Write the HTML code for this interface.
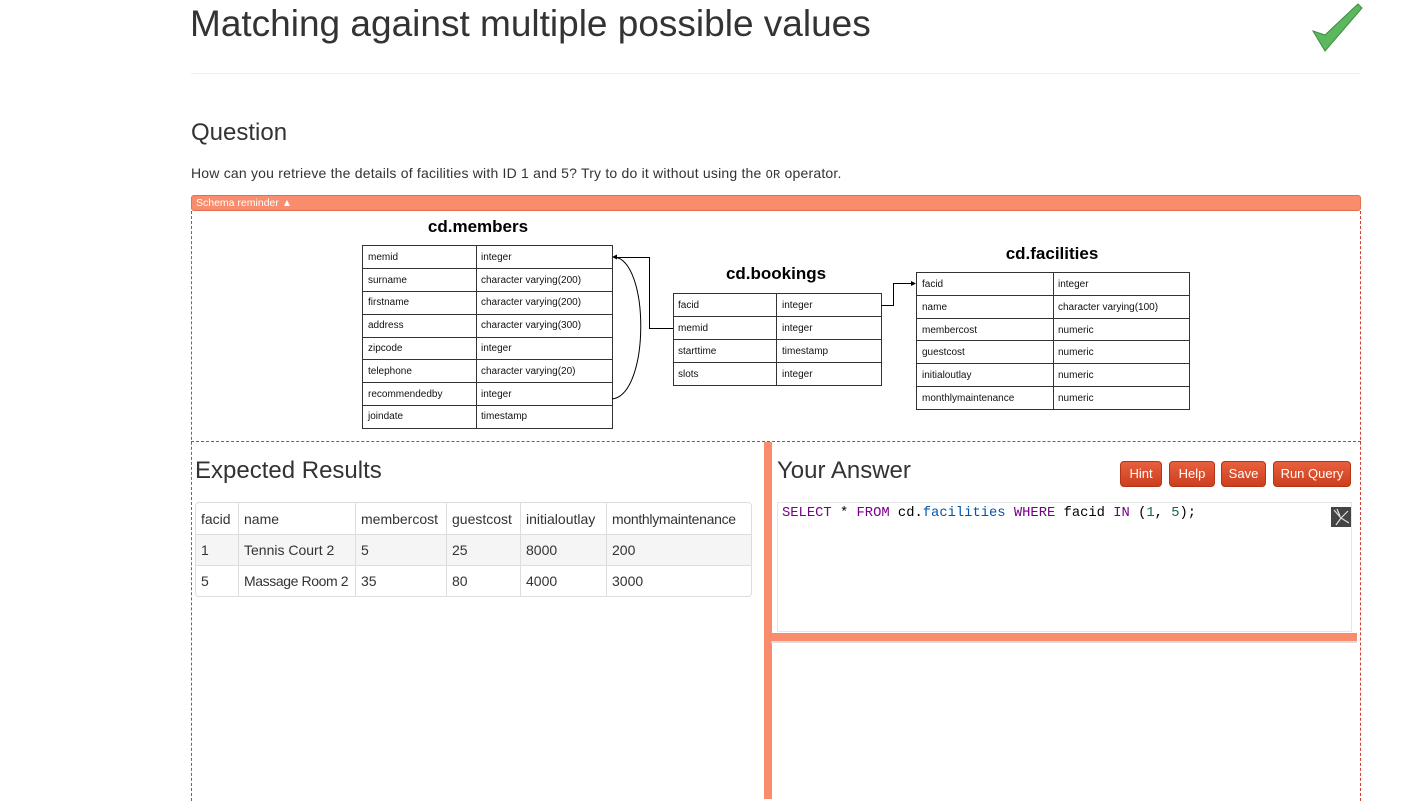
<!DOCTYPE html>
<html><head><meta charset="utf-8"><style>
*{margin:0;padding:0;box-sizing:border-box}
body{width:1409px;height:799px;overflow:hidden;background:#fff;font-family:"Liberation Sans","DejaVu Sans",sans-serif;color:#333;position:relative}
.a{position:absolute}
h1{position:absolute;left:190px;top:3px;font-size:37px;font-weight:normal;color:#333;white-space:nowrap}
.btn{position:absolute;top:461px;height:26px;background:linear-gradient(#e8603f,#cc3e1e);border:1px solid #b33517;border-radius:4px;color:#fff;font-size:13px;text-align:center;line-height:24px}
table.r{position:absolute;left:195px;top:502px;width:557px;table-layout:fixed;border-collapse:separate;border-spacing:0;border:1px solid #ddd;border-radius:4px;font-size:14px;color:#333}
table.r td{border-left:1px solid #ddd;border-top:1px solid #ddd;height:31px;padding:0 5px;white-space:nowrap;overflow:hidden}
table.r tr:first-child td{border-top:none}
table.r td:first-child{border-left:none}
table.r tr:nth-child(2) td{background:#f5f5f5}
</style></head><body>
<h1>Matching against multiple possible values</h1>
<svg class="a" style="left:1310px;top:3px" width="54" height="50"><polygon points="3,28 15,32 48,1 52,5 15,48" fill="#5cb85c" stroke="#3f8f3f" stroke-width="1"/></svg>
<div class="a" style="left:191px;top:73px;width:1169px;height:1px;background:#eee"></div>
<div class="a" style="left:191px;top:119px;font-size:24px;color:#333">Question</div>
<div class="a" style="left:191px;top:165px;font-size:14px;letter-spacing:0.2px;color:#333">How can you retrieve the details of facilities with ID 1 and 5? Try to do it without using the <span style="font-family:'Liberation Mono',monospace;font-size:12px">OR</span> operator.</div>
<div class="a" style="left:191px;top:195px;width:1170px;height:16px;background:#f98c6c;border:1px solid #e0704f;border-radius:3px;color:#fff;font-size:10.5px;line-height:14px;padding-left:4px">Schema reminder ▲</div>
<div class="a" style="left:191px;top:211px;width:1170px;height:590px;border-left:1px dashed #d04030;border-right:1px dashed #d04030"></div>
<div class="a" style="left:191px;top:441px;width:1170px;height:0;border-top:1px dashed #666"></div>
<svg class="a" style="left:0;top:0" width="1409" height="440" font-family="Liberation Sans,Arial,sans-serif">
<g font-size="17" font-weight="bold" fill="#000" text-anchor="middle">
<text x="478" y="232">cd.members</text><text x="776" y="279">cd.bookings</text><text x="1052" y="259">cd.facilities</text></g>
<g fill="none" stroke="#333" stroke-width="1">
<rect x="362.5" y="245.5" width="250" height="183"/><line x1="476.5" y1="245" x2="476.5" y2="428"/>
<path d="M362 268.5H612M362 291.5H612M362 314.5H612M362 337.5H612M362 359.5H612M362 382.5H612M362 405.5H612"/>
<rect x="673.5" y="293.5" width="208" height="92"/><line x1="776.5" y1="293" x2="776.5" y2="385"/>
<path d="M673 316.5H881M673 339.5H881M673 362.5H881"/>
<rect x="916.5" y="272.5" width="273" height="137"/><line x1="1053.5" y1="272" x2="1053.5" y2="409"/>
<path d="M916 295.5H1189M916 318.5H1189M916 340.5H1189M916 363.5H1189M916 386.5H1189"/>
<path d="M673 328.5H649.5V257.5H616" stroke="#000"/>
<path d="M612 399C650 395 650 260 614 257" stroke="#000"/>
<path d="M881 305.5H893.5V283.5H912" stroke="#000"/></g>
<polygon points="612,257 617,254.5 617,259.5" fill="#000"/><polygon points="916,283.5 911,281 911,286" fill="#000"/>
<g font-size="10" fill="#111">
<text x="368" y="260">memid</text><text x="481" y="260">integer</text>
<text x="368" y="283">surname</text><text x="481" y="283">character varying(200)</text>
<text x="368" y="305">firstname</text><text x="481" y="305">character varying(200)</text>
<text x="368" y="328">address</text><text x="481" y="328">character varying(300)</text>
<text x="368" y="351">zipcode</text><text x="481" y="351">integer</text>
<text x="368" y="374">telephone</text><text x="481" y="374">character varying(20)</text>
<text x="368" y="397">recommendedby</text><text x="481" y="397">integer</text>
<text x="368" y="419">joindate</text><text x="481" y="419">timestamp</text>
<text x="678" y="308">facid</text><text x="782" y="308">integer</text>
<text x="678" y="331">memid</text><text x="782" y="331">integer</text>
<text x="678" y="354">starttime</text><text x="782" y="354">timestamp</text>
<text x="678" y="377">slots</text><text x="782" y="377">integer</text>
<text x="922" y="287">facid</text><text x="1058" y="287">integer</text>
<text x="922" y="310">name</text><text x="1058" y="310">character varying(100)</text>
<text x="922" y="333">membercost</text><text x="1058" y="333">numeric</text>
<text x="922" y="355">guestcost</text><text x="1058" y="355">numeric</text>
<text x="922" y="378">initialoutlay</text><text x="1058" y="378">numeric</text>
<text x="922" y="401">monthlymaintenance</text><text x="1058" y="401">numeric</text></g>
</svg>
<div class="a" style="left:195px;top:457px;font-size:24px;color:#333">Expected Results</div>
<table class="r">
<colgroup><col style="width:42px"><col style="width:117px"><col style="width:91px"><col style="width:74px"><col style="width:86px"><col></colgroup>
<tr><td>facid</td><td>name</td><td>membercost</td><td>guestcost</td><td>initialoutlay</td><td style="letter-spacing:-0.3px">monthlymaintenance</td></tr>
<tr><td>1</td><td>Tennis Court 2</td><td>5</td><td>25</td><td>8000</td><td>200</td></tr>
<tr><td>5</td><td style="letter-spacing:-0.4px">Massage Room 2</td><td>35</td><td>80</td><td>4000</td><td>3000</td></tr>
</table>
<div class="a" style="left:764px;top:442px;width:8px;height:357px;background:#f98c6c"></div>
<div class="a" style="left:777px;top:457px;font-size:24px;color:#333">Your Answer</div>
<div class="btn" style="left:1120px;width:42px">Hint</div>
<div class="btn" style="left:1169px;width:46px">Help</div>
<div class="btn" style="left:1221px;width:45px">Save</div>
<div class="btn" style="left:1273px;width:78px">Run Query</div>
<div class="a" style="left:777px;top:502px;width:575px;height:130px;border:1px solid #e6e6e6;background:#fff"></div>
<div class="a" style="left:782px;top:506px;font-family:'Liberation Mono',monospace;font-size:13.8px;color:#000;white-space:pre"><span style="color:#708">SELECT</span> * <span style="color:#708">FROM</span> cd.<span style="color:#05a">facilities</span> <span style="color:#708">WHERE</span> facid <span style="color:#708">IN</span> (<span style="color:#164">1</span>, <span style="color:#164">5</span>);</div>
<svg class="a" style="left:1331px;top:507px" width="20" height="20"><rect width="20" height="20" fill="#444"/><path d="M3 3L10 11L17 4M10 11L18 16M10 11L5 18M6 2L9 9" stroke="#ddd" stroke-width="1.2" fill="none"/></svg>
<div class="a" style="left:771px;top:633px;width:586px;height:8px;background:#f98c6c"></div>
<div class="a" style="left:771px;top:641px;width:586px;height:2px;background:#ddd"></div>
</body></html>
